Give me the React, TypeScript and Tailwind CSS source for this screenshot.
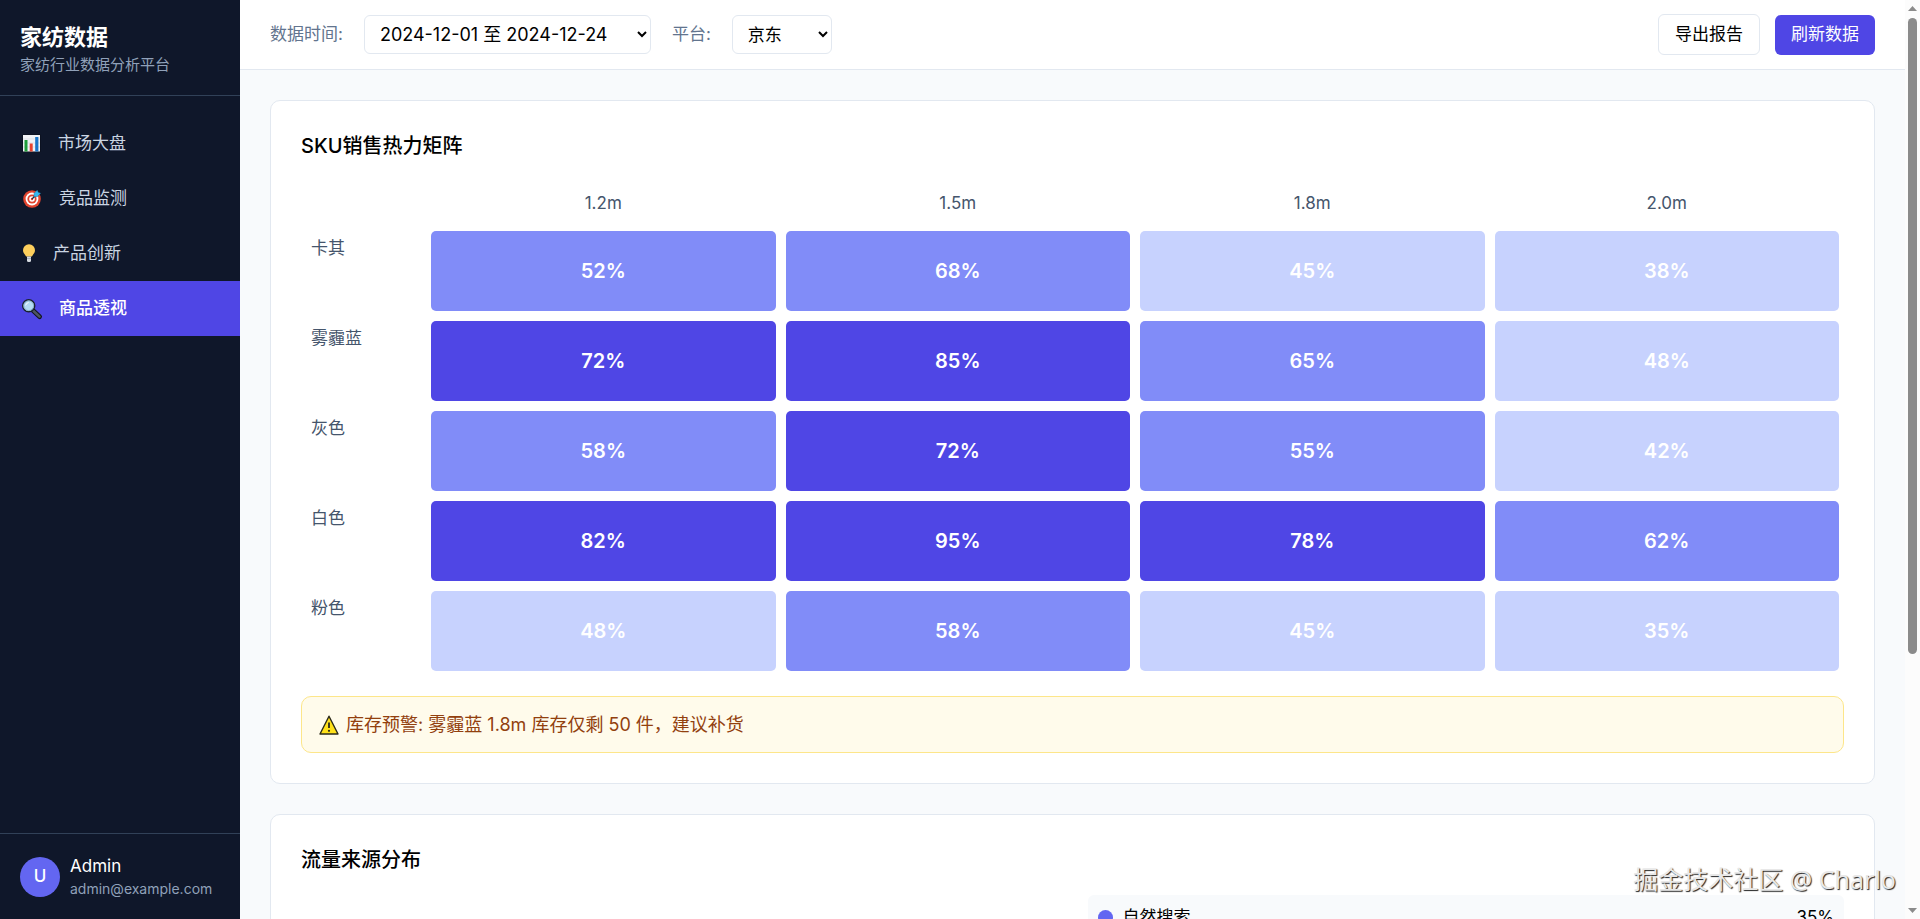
import React from 'react';

const navItems = [
  { label: '市场大盘', icon: 'chart' },
  { label: '竞品监测', icon: 'target' },
  { label: '产品创新', icon: 'bulb' },
  { label: '商品透视', icon: 'search' },
];

const sizes = ['1.2m', '1.5m', '1.8m', '2.0m'];

const matrix = [
  { color: '卡其', values: [52, 68, 45, 38] },
  { color: '雾霾蓝', values: [72, 85, 65, 48] },
  { color: '灰色', values: [58, 72, 55, 42] },
  { color: '白色', values: [82, 95, 78, 62] },
  { color: '粉色', values: [48, 58, 45, 35] },
];

const heatClass = (value: number) => {
  if (value > 70) return 'bg-[#4f46e5]';
  if (value > 50) return 'bg-[#818cf8]';
  return 'bg-[#c7d2fe]';
};

const NavIcon = ({ name }: { name: string }) => {
  if (name === 'chart') {
    return (
      <svg className="w-[22px] h-[22px]" viewBox="0 0 22 22" aria-hidden="true">
        <rect x="2.5" y="1.5" width="18" height="17.5" fill="#0b0f19" />
        <rect x="3" y="2" width="17" height="16.5" fill="#f1f3f6" />
        <path d="M3 6h17M3 10h17M3 14h17" stroke="#d5dbe3" strokeWidth="0.7" />
        <rect x="4.5" y="7" width="3" height="11.5" fill="#1f9d3a" />
        <rect x="9.7" y="10.5" width="3" height="8" fill="#e8432f" />
        <rect x="15.2" y="4" width="3.2" height="14.5" fill="#1976c9" />
      </svg>
    );
  }
  if (name === 'target') {
    return (
      <svg className="w-[23px] h-[22px]" viewBox="0 0 23 22" aria-hidden="true">
        <circle cx="12" cy="11" r="8.8" fill="#e2452f" />
        <circle cx="12" cy="11" r="6.4" fill="#fff" />
        <circle cx="12" cy="11" r="4.6" fill="#e2452f" />
        <circle cx="12" cy="11" r="2.8" fill="#fff" />
        <circle cx="12" cy="11" r="1.2" fill="#e2452f" />
        <path d="M12 11l4-4" stroke="#15324a" strokeWidth="1.2" />
        <path d="M13.8 8.7l.3-3.4 3.200-3.200.9 2.200 2.500 1-3.400 3.400z" fill="#35b8ee" stroke="#1c5d80" strokeWidth="0.4" />
      </svg>
    );
  }
  if (name === 'bulb') {
    return (
      <svg className="w-[17px] h-[22px]" viewBox="0 0 17 22" aria-hidden="true">
        <path
          d="M9 1.3a6 6 0 0 0-6 6c0 2.700 1.800 4 3.200 6.200h5.600c1.400-2.200 3.200-3.500 3.200-6.200a6 6 0 0 0-6-6z"
          fill="#fdcf5c"
        />
        <path d="M7 13.500h4v4a1.500 1.500 0 0 1-1.500 1.500h-1a1.500 1.500 0 0 1-1.500-1.500z" fill="#d5dae0" />
        <path d="M7 15.500h4" stroke="#8b95a1" strokeWidth="0.6" />
      </svg>
    );
  }
  return (
    <svg className="w-[23px] h-[22px]" viewBox="0 0 23 22" aria-hidden="true">
      <path d="M12.500 12l7.200 6.700" stroke="#11151d" strokeWidth="4.6" strokeLinecap="round" />
      <path d="M13.500 13l6 5.600" stroke="#4d5560" strokeWidth="2.6" strokeLinecap="round" />
      <circle cx="8.7" cy="7.7" r="6" fill="#b4dcf4" stroke="#1a222e" strokeWidth="1.5" />
      <circle cx="8.7" cy="7.7" r="4.9" fill="none" stroke="#7fa9c6" strokeWidth="0.9" />
      <path d="M5.700 7a3.300 3.300 0 0 1 2.500-2.400" stroke="#fff" strokeWidth="1" fill="none" strokeLinecap="round" />
    </svg>
  );
};

const Sidebar = () => (
  <aside className="flex w-60 shrink-0 flex-col bg-[#0f172a] text-white">
    <div className="border-b border-slate-700 px-5 pt-[22px] pb-[18px]">
      <h1 className="text-[22px] leading-[30px] font-bold">家纺数据</h1>
      <p className="text-[15px] leading-[25px] text-slate-400">家纺行业数据分析平台</p>
    </div>

    <nav className="flex-1 py-5">
      {navItems.map((item) => (
        <a
          key={item.label}
          href="#"
          className={`flex items-center gap-4 px-5 py-[15px] text-[17px] leading-[25px] ${
            item.label === '商品透视' ? 'bg-[#4f46e5] font-medium text-white' : 'text-slate-300'
          }`}
        >
          <NavIcon name={item.icon} />
          {item.label}
        </a>
      ))}
    </nav>

    <div className="flex items-center gap-[10px] border-t border-slate-700 p-5">
      <div className="flex h-10 w-10 shrink-0 items-center justify-center rounded-full bg-[#6366f1] text-[17px] font-medium">
        U
      </div>
      <div>
        <p className="text-[17px] leading-[25px]">Admin</p>
        <p className="text-[14px] leading-5 text-slate-400">admin@example.com</p>
      </div>
    </div>
  </aside>
);

const Header = () => (
  <header className="flex items-center justify-between border-b border-slate-200 bg-white px-[30px] py-[14px] text-[17px]">
    <div className="flex items-center gap-[21px]">
      <label htmlFor="date-range" className="text-slate-500">数据时间:</label>
      <select
        id="date-range"
        className="h-[39px] w-[287px] rounded-md border border-slate-200 bg-white px-[11px] text-[18px] text-black"
      >
        <option>2024-12-01 至 2024-12-24</option>
      </select>
      <label htmlFor="platform" className="text-slate-500">平台:</label>
      <select
        id="platform"
        className="h-[39px] w-[100px] rounded-md border border-slate-200 bg-white px-[11px] text-black"
      >
        <option>京东</option>
      </select>
    </div>
    <div className="flex items-center gap-[15px]">
      <button className="h-[41px] rounded-md border border-slate-200 px-4 text-black">导出报告</button>
      <button className="h-10 rounded-md bg-[#4f46e5] px-4 text-white">刷新数据</button>
    </div>
  </header>
);

const SkuMatrix = () => (
  <section className="rounded-[10px] border border-slate-200 bg-white p-[30px]">
    <h2 className="mb-5 text-[20px] leading-[30px] font-medium text-black">SKU销售热力矩阵</h2>

    <table className="w-full table-fixed border-collapse text-[17px] leading-[25px] text-slate-600">
      <thead>
        <tr>
          <th className="w-[125px] p-[10px]"></th>
          {sizes.map((size) => (
            <th key={size} className="p-[10px] font-normal">{size}</th>
          ))}
        </tr>
      </thead>
      <tbody>
        {matrix.map((row) => (
          <tr key={row.color}>
            <th className="p-[10px] text-left align-top font-normal">{row.color}</th>
            {row.values.map((value, i) => (
              <td key={i} className="p-[5px]">
                <div
                  className={`flex h-20 items-center justify-center rounded-[5px] text-[20px] font-semibold text-white ${heatClass(value)}`}
                >
                  {value}%
                </div>
              </td>
            ))}
          </tr>
        ))}
      </tbody>
    </table>

    {/* Stock warning */}
    <div className="mt-5 flex items-center gap-[6px] rounded-[10px] border border-[#fde68a] bg-[#fffbeb] px-4 py-[15px] text-[18px] leading-[25px] text-[#92400e]">
      <svg className="h-[22px] w-[22px]" viewBox="0 0 22 22" aria-hidden="true">
        <path d="M11 2.200L20 20H2z" fill="#ffe11a" stroke="#2b2a1a" strokeWidth="1.4" strokeLinejoin="round" />
        <path d="M11 8.500v5.500" stroke="#2b2a1a" strokeWidth="1.8" />
        <circle cx="11" cy="16.8" r="1.1" fill="#2b2a1a" />
      </svg>
      <p>库存预警: 雾霾蓝 1.8m 库存仅剩 50 件，建议补货</p>
    </div>
  </section>
);

const TrafficSource = () => (
  <section className="rounded-[10px] border border-slate-200 bg-white p-[30px]">
    <h2 className="mb-5 text-[20px] leading-[30px] font-medium text-black">流量来源分布</h2>
    <div className="grid grid-cols-2 gap-[30px]">
      <div className="h-80"></div>
      <ul>
        <li className="flex items-center gap-[10px] rounded-md bg-slate-50 p-[10px] text-[17px] leading-[25px] text-black">
          <span className="h-[15px] w-[15px] rounded-full bg-[#6366f1]"></span>
          <span className="flex-1">自然搜索</span>
          <span>35%</span>
        </li>
      </ul>
    </div>
  </section>
);

const Scrollbar = () => (
  <div className="flex w-[15px] shrink-0 flex-col items-center justify-between bg-[#fcfcfc] py-[6px]" aria-hidden="true">
    <svg className="h-[5px] w-[9px]" viewBox="0 0 9 5">
      <path d="M4.500 0L9 5H0z" fill="#8b8b8b" />
    </svg>
    <div className="my-[7px] w-[9px] flex-1">
      <div className="h-[72%] rounded-full bg-[#8b8b8b]"></div>
    </div>
    <svg className="h-[5px] w-[9px]" viewBox="0 0 9 5">
      <path d="M4.500 5L9 0H0z" fill="#8b8b8b" />
    </svg>
  </div>
);

const App = () => {
  return (
    <div className="relative flex h-screen overflow-hidden bg-slate-50 font-['Inter','Noto_Sans_CJK_SC',sans-serif]">
      <Sidebar />
      <main className="flex-1 overflow-hidden">
        <Header />
        <div className="space-y-[30px] p-[30px]">
          <SkuMatrix />
          <TrafficSource />
        </div>
      </main>
      <Scrollbar />

      {/* Watermark */}
      <p className="absolute right-6 bottom-[22px] font-['Noto_Sans','Noto_Sans_CJK_SC',sans-serif] text-[25px] leading-9 text-[#e8e8e8] [text-shadow:1px_1px_1px_#222]">
        掘金技术社区 @ Charlo
      </p>
    </div>
  );
};

export default App;
